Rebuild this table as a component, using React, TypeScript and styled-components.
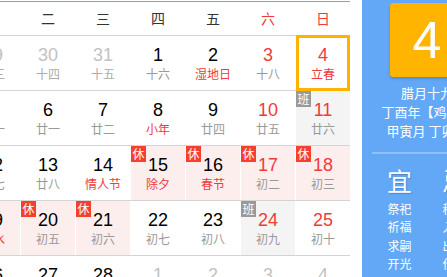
import React from "react";
import styled, { createGlobalStyle, css } from "styled-components";

const GlobalStyle = createGlobalStyle`
  html, body {
    margin: 0;
    padding: 0;
    background: #fff;
    overflow: hidden;
  }
  body {
    font-family: "Liberation Sans", Arial, "Noto Sans CJK SC", sans-serif;
  }
`;

const Page = styled.div`
  display: flex;
  width: 447px;
  height: 277px;
  overflow: hidden;
`;

const Calendar = styled.div`
  flex: none;
  width: 384px;
  margin-left: -34px;
  margin-top: 1px;
  border-top: 1px solid #6ea6e6;
`;

const WeekRow = styled.div`
  display: grid;
  grid-template-columns: repeat(7, 54px);
  column-gap: 1px;
  border-bottom: 1px solid #d4d4d4;
`;

const HeadCell = styled.div<{ $red?: boolean }>`
  height: 33px;
  line-height: 33px;
  text-align: center;
  font-size: 14px;
  font-family: "Noto Sans CJK SC", sans-serif;
  color: ${(p) => (p.$red ? "#ee3b3b" : "#333")};
`;

const DayCell = styled.div<{ $tag?: "休" | "班"; $sel?: boolean }>`
  position: relative;
  height: 54px;
  padding-top: 9px;
  box-sizing: border-box;
  text-align: center;
  background: ${(p) =>
    p.$tag === "休" ? "#fdeeee" : p.$tag === "班" ? "#f4f4f4" : "#fff"};
  ${(p) =>
    p.$sel &&
    css`
      &::after {
        content: "";
        position: absolute;
        left: 0;
        right: 0;
        top: -1px;
        bottom: -1px;
        border: 3px solid #ffb300;
      }
    `}
`;

const DayNum = styled.div<{ $red?: boolean; $dim?: boolean }>`
  font-size: 18px;
  line-height: 20px;
  color: ${(p) => (p.$dim ? "#c2c2c2" : p.$red ? "#ee3b3b" : "#000")};
`;

const Lunar = styled.div<{ $red?: boolean; $dim?: boolean }>`
  margin-top: 1px;
  font-size: 12px;
  line-height: 16px;
  font-family: "Noto Sans CJK SC", sans-serif;
  white-space: nowrap;
  color: ${(p) => (p.$red ? "#ee3b3b" : p.$dim ? "#acacac" : "#999")};
`;

const Badge = styled.span<{ $kind: "休" | "班" }>`
  position: absolute;
  left: 0;
  top: 0;
  width: 15px;
  height: 16px;
  line-height: 16px;
  font-size: 12px;
  text-align: center;
  font-family: "Noto Sans CJK SC", sans-serif;
  color: #fff;
  background: ${(p) => (p.$kind === "休" ? "#f5402f" : "#999")};
`;

const Panel = styled.div`
  flex: none;
  width: 130px;
  height: 277px;
  margin-left: 12px;
  background: #63a8f6;
  color: #fff;
  font-family: "Noto Sans CJK SC", sans-serif;
  display: flex;
  flex-direction: column;
  align-items: center;
`;

const BigDay = styled.div`
  flex: none;
  margin-top: 3px;
  width: 74px;
  height: 74px;
  border-radius: 3px;
  background: #ffb400;
  box-shadow: 0 2px 3px rgba(0, 0, 0, 0.18);
  font-family: "Liberation Sans", Arial, sans-serif;
  font-size: 52px;
  line-height: 74px;
  text-align: center;
`;

const InfoBlock = styled.div`
  flex: none;
  margin-top: 6px;
  display: flex;
  flex-direction: column;
  align-items: center;
`;

const InfoLine = styled.div`
  height: 19px;
  font-size: 13px;
  line-height: 19px;
  white-space: nowrap;
`;

const Divider = styled.div`
  flex: none;
  width: 110px;
  height: 2px;
  margin-top: 12px;
  background: #8ec2fa;
`;

const Advice = styled.div`
  flex: none;
  display: grid;
  grid-template-columns: 55px 55px;
  margin-top: 11px;
`;

const AdviceCol = styled.div`
  display: flex;
  flex-direction: column;
  align-items: center;
`;

const AdviceTitle = styled.div`
  height: 30px;
  font-size: 25px;
  line-height: 30px;
  text-shadow: 1px 1px 1px rgba(0, 0, 0, 0.2);
  margin-bottom: 5px;
`;

const AdviceItem = styled.div`
  height: 18.4px;
  font-size: 12px;
  line-height: 18.4px;
`;

type Day = {
  d: number;
  l: string;
  red?: boolean;
  lred?: boolean;
  dim?: boolean;
  tag?: "休" | "班";
  sel?: boolean;
};

const heads = ["一", "二", "三", "四", "五", "六", "日"];

const weeks: Day[][] = [
  [
    { d: 29, l: "十三", dim: true },
    { d: 30, l: "十四", dim: true },
    { d: 31, l: "十五", dim: true },
    { d: 1, l: "十六" },
    { d: 2, l: "湿地日", lred: true },
    { d: 3, l: "十八", red: true },
    { d: 4, l: "立春", red: true, lred: true, sel: true },
  ],
  [
    { d: 5, l: "二十" },
    { d: 6, l: "廿一" },
    { d: 7, l: "廿二" },
    { d: 8, l: "小年", lred: true },
    { d: 9, l: "廿四" },
    { d: 10, l: "廿五", red: true },
    { d: 11, l: "廿六", red: true, tag: "班" },
  ],
  [
    { d: 12, l: "廿七" },
    { d: 13, l: "廿八" },
    { d: 14, l: "情人节", lred: true },
    { d: 15, l: "除夕", lred: true, tag: "休" },
    { d: 16, l: "春节", lred: true, tag: "休" },
    { d: 17, l: "初二", red: true, tag: "休" },
    { d: 18, l: "初三", red: true, tag: "休" },
  ],
  [
    { d: 19, l: "雨水", lred: true, tag: "休" },
    { d: 20, l: "初五", tag: "休" },
    { d: 21, l: "初六", tag: "休" },
    { d: 22, l: "初七" },
    { d: 23, l: "初八" },
    { d: 24, l: "初九", red: true, tag: "班" },
    { d: 25, l: "初十", red: true },
  ],
  [
    { d: 26, l: "十一" },
    { d: 27, l: "十二" },
    { d: 28, l: "十三" },
    { d: 1, l: "十四", dim: true },
    { d: 2, l: "十五", dim: true },
    { d: 3, l: "十六", dim: true },
    { d: 4, l: "十七", dim: true },
  ],
];

const yi = ["祭祀", "祈福", "求嗣", "开光", "嫁娶"];
const ji = ["移徙", "入宅", "出火", "作灶", "安葬"];

export default function App() {
  return (
    <Page>
      <GlobalStyle />
      <Calendar>
        <WeekRow>
          {heads.map((h, i) => (
            <HeadCell key={h} $red={i >= 5}>
              {h}
            </HeadCell>
          ))}
        </WeekRow>
        {weeks.map((w, wi) => (
          <WeekRow key={wi}>
            {w.map((day, di) => (
              <DayCell key={di} $tag={day.tag} $sel={day.sel}>
                {day.tag && <Badge $kind={day.tag}>{day.tag}</Badge>}
                <DayNum $red={day.red} $dim={day.dim}>
                  {day.d}
                </DayNum>
                <Lunar $red={day.lred} $dim={day.dim}>
                  {day.l}
                </Lunar>
              </DayCell>
            ))}
          </WeekRow>
        ))}
      </Calendar>
      <Panel>
        <BigDay>4</BigDay>
        <InfoBlock>
          <InfoLine>腊月十九</InfoLine>
          <InfoLine>丁酉年【鸡年】</InfoLine>
          <InfoLine>甲寅月 丁卯日</InfoLine>
        </InfoBlock>
        <Divider />
        <Advice>
          <AdviceCol>
            <AdviceTitle>宜</AdviceTitle>
            {yi.map((t) => (
              <AdviceItem key={t}>{t}</AdviceItem>
            ))}
          </AdviceCol>
          <AdviceCol>
            <AdviceTitle>忌</AdviceTitle>
            {ji.map((t) => (
              <AdviceItem key={t}>{t}</AdviceItem>
            ))}
          </AdviceCol>
        </Advice>
      </Panel>
    </Page>
  );
}
